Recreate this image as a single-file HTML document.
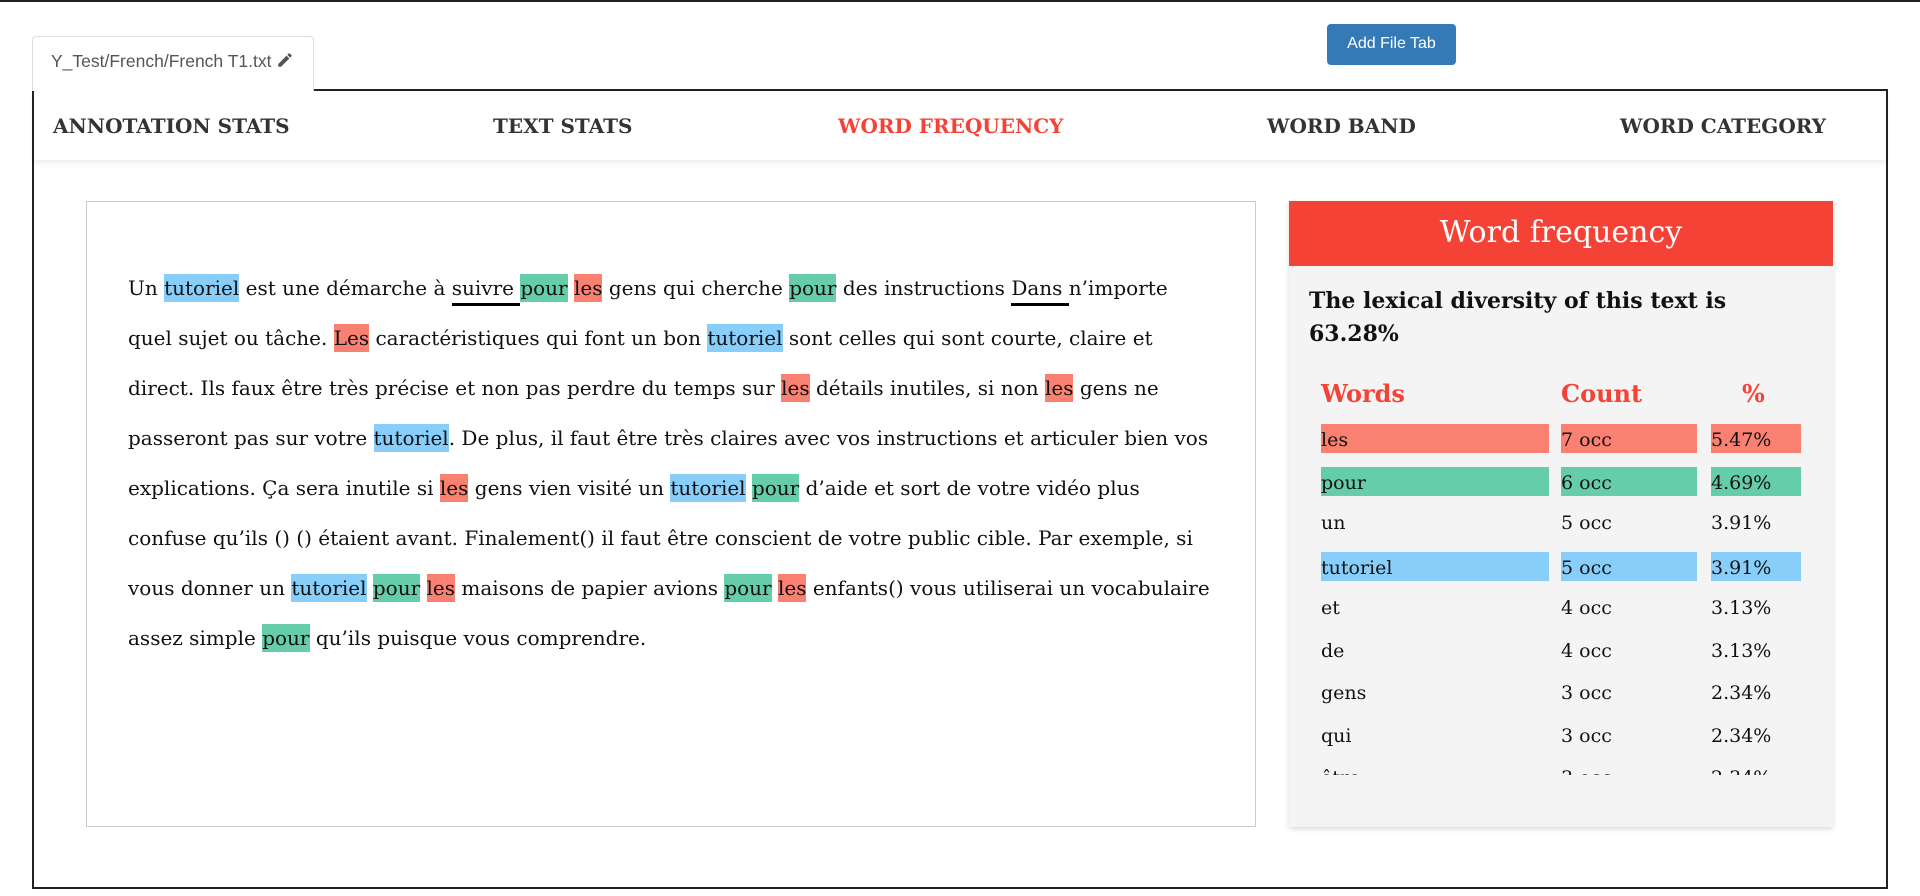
<!DOCTYPE html>
<html><head><meta charset="utf-8"><style>
*{box-sizing:border-box;margin:0;padding:0}
body{width:1920px;height:896px;position:relative;background:#fff;overflow:hidden;font-family:"DejaVu Serif",serif;}
.abs{position:absolute}
.topline{left:0;top:0;width:1920px;height:2px;background:#222}
.tab{left:32px;top:36px;width:282px;height:55px;border:1px solid #ddd;border-bottom:none;border-radius:4px 4px 0 0;background:#fff;font-family:"Liberation Sans",sans-serif;font-size:17.5px;color:#555;padding:14px 0 0 18px;z-index:2}
.btn{left:1327px;top:24px;width:129px;height:41px;background:#337ab7;border-radius:4px;color:#fff;font-family:"Liberation Sans",sans-serif;font-size:16px;text-align:center;line-height:40px}
.main{left:32px;top:89px;width:1856px;height:800px;border:2px solid #222}
.nav{left:34px;top:91px;width:1852px;height:69px;background:#fff;box-shadow:0 3px 5px rgba(0,0,0,.08)}
.nav span{position:absolute;top:23px;font-weight:bold;font-size:20px;color:#333;white-space:nowrap}
.left{left:86px;top:201px;width:1170px;height:626px;border:1px solid #ccc;background:#fff}
.txt{position:absolute;left:41px;top:61px;font-size:20px;line-height:50px;white-space:nowrap;color:#111}
.b,.g,.r{padding:2px 0}
.b{background:#87cefa}.g{background:#66cdaa}.r{background:#fa8072}
.u{border-bottom:3px solid #000;padding-bottom:3px}
.right{left:1289px;top:201px;width:544px;height:626px;background:#f4f4f4;box-shadow:0 2px 5px rgba(0,0,0,.15)}
.hd{position:absolute;left:0;top:0;width:544px;height:65px;background:#f44336;color:#fff;font-size:30px;text-align:center;line-height:64px}
.lex{position:absolute;left:20px;top:84px;font-weight:bold;font-size:22px;line-height:33px;color:#111}
.th{position:absolute;top:178px;font-weight:bold;font-size:24px;color:#f44336}
.rows{position:absolute;left:0;top:215px;width:544px;height:359px;overflow:hidden}
.row{position:absolute;height:29px;font-size:19px;line-height:29px;color:#111}
</style></head><body>
<div class="abs topline"></div>
<div class="abs tab">Y_Test/French/French T1.txt <svg width="18" height="18" viewBox="0 0 24 24" style="vertical-align:-2px"><path d="M3 17.25V21h3.75L17.81 9.94l-3.75-3.75L3 17.25zM20.71 7.04a1 1 0 0 0 0-1.41l-2.34-2.34a1 1 0 0 0-1.41 0l-1.83 1.83 3.75 3.75 1.83-1.830z" fill="#555"/></svg></div>
<div class="abs btn">Add File Tab</div>
<div class="abs main"></div>
<div class="abs nav">
<span style="left:19px">ANNOTATION STATS</span>
<span style="left:459px">TEXT STATS</span>
<span style="left:804px;color:#f44336">WORD FREQUENCY</span>
<span style="left:1233px">WORD BAND</span>
<span style="left:1586px">WORD CATEGORY</span>
</div>
<div class="abs left"><div class="txt">
Un <span class="b">tutoriel</span> est une démarche à <span class="u">suivre </span><span class="g">pour</span> <span class="r">les</span> gens qui cherche <span class="g">pour</span> des instructions <span class="u">Dans </span>n’importe<br>
quel sujet ou tâche. <span class="r">Les</span> caractéristiques qui font un bon <span class="b">tutoriel</span> sont celles qui sont courte, claire et<br>
direct. Ils faux être très précise et non pas perdre du temps sur <span class="r">les</span> détails inutiles, si non <span class="r">les</span> gens ne<br>
passeront pas sur votre <span class="b">tutoriel</span>. De plus, il faut être très claires avec vos instructions et articuler bien vos<br>
explications. Ça sera inutile si <span class="r">les</span> gens vien visité un <span class="b">tutoriel</span> <span class="g">pour</span> d’aide et sort de votre vidéo plus<br>
confuse qu’ils () () étaient avant. Finalement() il faut être conscient de votre public cible. Par exemple, si<br>
vous donner un <span class="b">tutoriel</span> <span class="g">pour</span> <span class="r">les</span> maisons de papier avions <span class="g">pour</span> <span class="r">les</span> enfants() vous utiliserai un vocabulaire<br>
assez simple <span class="g">pour</span> qu’ils puisque vous comprendre.
</div></div>
<div class="abs right">
<div class="hd">Word frequency</div>
<div class="lex">The lexical diversity of this text is<br>63.28%</div>
<div class="th" style="left:32px">Words</div>
<div class="th" style="left:272px">Count</div>
<div class="th" style="left:453px">%</div>
<div class="rows">
<div class="row r" style="top:8px;left:32px;width:228px">les</div><div class="row r" style="top:8px;left:272px;width:136px">7 occ</div><div class="row r" style="top:8px;left:422px;width:90px">5.47%</div>
<div class="row g" style="top:51px;left:32px;width:228px">pour</div><div class="row g" style="top:51px;left:272px;width:136px">6 occ</div><div class="row g" style="top:51px;left:422px;width:90px">4.69%</div>
<div class="row" style="top:93px;left:32px">un</div><div class="row" style="top:93px;left:272px">5 occ</div><div class="row" style="top:93px;left:422px">3.91%</div>
<div class="row b" style="top:136px;left:32px;width:228px">tutoriel</div><div class="row b" style="top:136px;left:272px;width:136px">5 occ</div><div class="row b" style="top:136px;left:422px;width:90px">3.91%</div>
<div class="row" style="top:178px;left:32px">et</div><div class="row" style="top:178px;left:272px">4 occ</div><div class="row" style="top:178px;left:422px">3.13%</div>
<div class="row" style="top:221px;left:32px">de</div><div class="row" style="top:221px;left:272px">4 occ</div><div class="row" style="top:221px;left:422px">3.13%</div>
<div class="row" style="top:263px;left:32px">gens</div><div class="row" style="top:263px;left:272px">3 occ</div><div class="row" style="top:263px;left:422px">2.34%</div>
<div class="row" style="top:306px;left:32px">qui</div><div class="row" style="top:306px;left:272px">3 occ</div><div class="row" style="top:306px;left:422px">2.34%</div>
<div class="row" style="top:348px;left:32px">être</div><div class="row" style="top:348px;left:272px">3 occ</div><div class="row" style="top:348px;left:422px">2.34%</div>
</div>
</div>
</body></html>
